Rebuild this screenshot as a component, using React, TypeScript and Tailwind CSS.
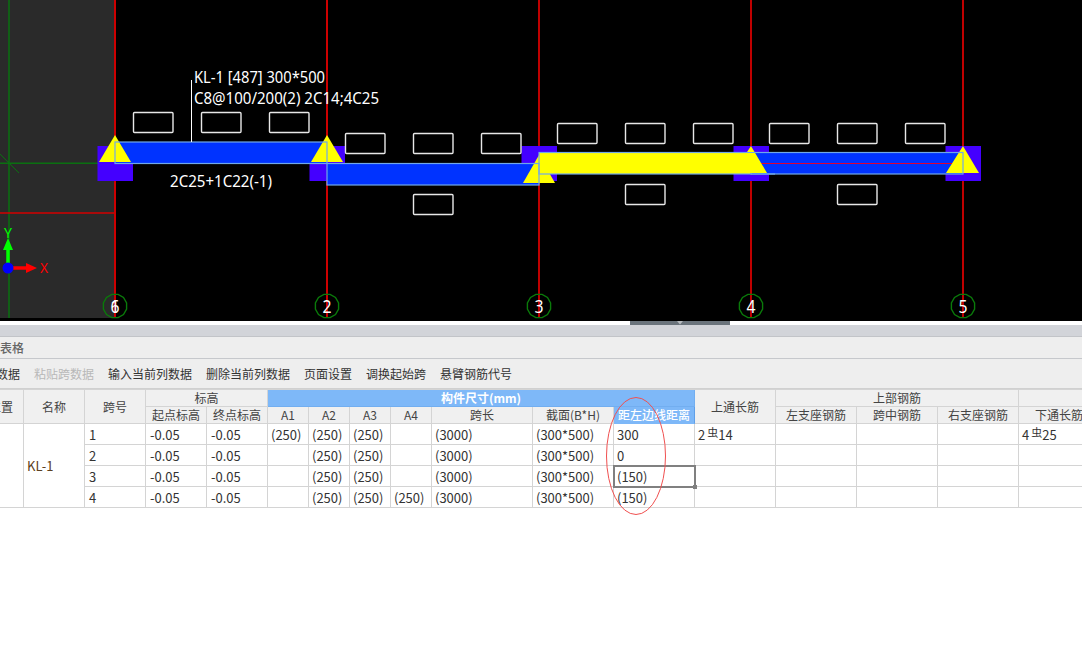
import React from "react";

const FONT = { fontFamily: '"Noto Sans CJK SC", sans-serif' };
const LATIN = '"Noto Sans", "Noto Sans CJK SC", sans-serif';

function Box({ x, y }: { x: number; y: number }) {
  return <rect x={x + 0.5} y={y + 0.5} width={39.5} height={20} rx={1} fill="#000" stroke="#e8e8e8" strokeWidth={1.4} />;
}

function Bubble({ x, labels }: { x: number; labels: string[] }) {
  const pts = Array.from({ length: 12 }, (_, i) => {
    const a = (Math.PI * 2 * (i + 0.5)) / 12;
    return `${x + 12 * Math.cos(a)},${306 + 12 * Math.sin(a)}`;
  }).join(" ");
  return (
    <g>
      <polygon points={pts} fill="none" stroke="#0a7a0a" strokeWidth={1.4} />
      {labels.map((l) => (
        <text key={l} x={x} y={312.5} fill="#fff" fontSize={18} textAnchor="middle" fontFamily={LATIN} textLength={9} lengthAdjust="spacingAndGlyphs">
          {l}
        </text>
      ))}
    </g>
  );
}

function Drawing() {
  return (
    <svg width={1082} height={321} viewBox="0 0 1082 321" className="block">
      <rect x={0} y={0} width={1082} height={321} fill="#000" />
      <rect x={0} y={0} width={115} height={318} fill="#2a2a2a" />
      <line x1={9} y1={0} x2={9} y2={318} stroke="#0a7010" strokeWidth={1.5} />
      <line x1={0} y1={163.3} x2={115} y2={163.3} stroke="#0a7010" strokeWidth={1.5} />
      <line x1={0} y1={154} x2={19} y2={173} stroke="#0a7010" strokeWidth={1} />
      <line x1={0} y1={213} x2={115} y2={213} stroke="#d40000" strokeWidth={1.6} />

      {[115, 327].map((x) => (
        <line key={x} x1={x} y1={0} x2={x} y2={317} stroke="#cc0000" strokeWidth={2} />
      ))}
      {[539, 751, 963].map((x) => (
        <line key={x} x1={x} y1={0} x2={x} y2={317} stroke="#f00000" strokeWidth={1.6} />
      ))}

      {[97, 309, 521, 733, 945].map((x) => (
        <rect key={x} x={x + 0.5} y={146} width={35.5} height={35} fill="#4400ff" />
      ))}

      <rect x={115} y={142} width={212} height={21.5} fill="#0033ff" />
      <rect x={327} y={163.5} width={212} height={21.5} fill="#0033ff" />
      <rect x={751} y={152.5} width={212} height={21.5} fill="#0033ff" />

      <polygon points="115,135 99,162 131,162" fill="#ffff00" />
      <polygon points="327,135 311,162 343,162" fill="#ffff00" />
      <polygon points="539,155 523,183 555,183" fill="#ffff00" />
      <polygon points="963,146 946,173 979,173" fill="#ffff00" />

      <rect x={539} y={152.5} width={212} height={21.5} fill="#ffff00" />

      <line x1={760} y1={163.5} x2={952} y2={163.5} stroke="#e00030" strokeWidth={1} />

      <rect x={115} y={142} width={212} height={21.5} fill="none" stroke="#70a8e8" strokeWidth={1.2} />
      <rect x={327} y={163.5} width={212} height={21.5} fill="none" stroke="#70a8e8" strokeWidth={1.2} />
      <rect x={539} y={152.5} width={212} height={21.5} fill="none" stroke="#70a8e8" strokeWidth={1.2} />
      <rect x={751} y={152.5} width={212} height={21.5} fill="none" stroke="#70a8e8" strokeWidth={1.2} />

      <polygon points="751,146 733,173 767,173" fill="#ffff00" />
      <line x1={733} y1={152.5} x2={775} y2={152.5} stroke="#70a8e8" strokeWidth={1.2} />
      <line x1={751} y1={174} x2={775} y2={174} stroke="#70a8e8" strokeWidth={1.2} />

      {[133, 201, 269].map((x) => <Box key={x} x={x} y={112} />)}
      {[345, 413, 481].map((x) => <Box key={x} x={x} y={133} />)}
      <Box x={413} y={194} />
      {[557, 625, 693, 769, 837, 905].map((x) => <Box key={x} x={x} y={123} />)}
      <Box x={625} y={184} />
      <Box x={837} y={184} />

      <line x1={191.5} y1={80} x2={191.5} y2={142} stroke="#fff" strokeWidth={1} />
      <text x={194} y={82.5} fill="#fff" fontSize={16} fontFamily={LATIN} textLength={131} lengthAdjust="spacingAndGlyphs">KL-1 [487] 300*500</text>
      <text x={194} y={104} fill="#fff" fontSize={16} fontFamily={LATIN} textLength={185} lengthAdjust="spacingAndGlyphs">C8@100/200(2) 2C14;4C25</text>
      <text x={170} y={187} fill="#fff" fontSize={16} fontFamily={LATIN} textLength={102} lengthAdjust="spacingAndGlyphs">2C25+1C22(-1)</text>

      <line x1={8} y1={268} x2={8} y2={248} stroke="#00ff00" strokeWidth={3.5} />
      <polygon points="8,238 3,250 13,250" fill="#00ff00" />
      <line x1={8} y1={268} x2={28} y2={268} stroke="#ff0000" strokeWidth={3.5} />
      <polygon points="37,268 26,263 26,273" fill="#ff0000" />
      <circle cx={8} cy={268} r={5.5} fill="#0000ff" />
      <text x={4} y={237.5} fill="#00ff00" fontSize={14} fontFamily={LATIN} textLength={8} lengthAdjust="spacingAndGlyphs">Y</text>
      <text x={40} y={273} fill="#ff0000" fontSize={14} fontFamily={LATIN} textLength={8} lengthAdjust="spacingAndGlyphs">X</text>

      <Bubble x={115} labels={["6", "1"]} />
      <Bubble x={327} labels={["2"]} />
      <Bubble x={539} labels={["3"]} />
      <Bubble x={751} labels={["4"]} />
      <Bubble x={963} labels={["5"]} />
    </svg>
  );
}

function Head({ children, className = "" }: { children?: React.ReactNode; className?: string }) {
  return (
    <div className={`flex items-center justify-center whitespace-nowrap overflow-hidden bg-[#f0f0f0] border-r border-b border-[#d4d4d4] text-[#444] ${className}`}>
      {children}
    </div>
  );
}

function Cell({ children, className = "" }: { children?: React.ReactNode; className?: string }) {
  return (
    <div className={`flex items-center pl-[4px] whitespace-nowrap overflow-hidden bg-white border-r border-b border-[#d4d4d4] text-[#333] text-[13px] ${className}`}>
      {children}
    </div>
  );
}

function Rebar({ n, d }: { n: string; d: string }) {
  return (
    <span className="flex items-center">
      {n}
      <span className="text-[11px] leading-none ml-[2px] mb-[4px]">虫</span>
      {d}
    </span>
  );
}

const rows = [
  { no: "1", a: ["(250)", "(250)", "(250)", ""], off: "300" },
  { no: "2", a: ["", "(250)", "(250)", ""], off: "0" },
  { no: "3", a: ["", "(250)", "(250)", ""], off: "(150)" },
  { no: "4", a: ["", "(250)", "(250)", "(250)"], off: "(150)" },
];

function SheetTable() {
  return (
    <div className="ml-[-21px] w-[1200px] border-t border-[#d4d4d4] grid grid-cols-[45px_61px_61px_61px_61px_41px_41px_41px_41px_101px_81px_81px_81px_81px_81px_81px_81px] grid-rows-[17px_17px_21px_21px_21px_21px] text-[12px] leading-none">
      <Head className="row-span-2">位置</Head>
      <Head className="row-span-2">名称</Head>
      <Head className="row-span-2">跨号</Head>
      <Head className="col-span-2">标高</Head>
      <Head className="col-span-7 !bg-[#7eb8f8] !text-white font-bold !border-[#72aef0]">构件尺寸(mm)</Head>
      <Head className="row-span-2">上通长筋</Head>
      <Head className="col-span-3">上部钢筋</Head>
      <Head />
      <Head>起点标高</Head>
      <Head>终点标高</Head>
      <Head>A1</Head>
      <Head>A2</Head>
      <Head>A3</Head>
      <Head>A4</Head>
      <Head>跨长</Head>
      <Head>截面(B*H)</Head>
      <Head className="!bg-[#7eb8f8] !text-white font-medium !border-r-[#5f9fe8] !border-b-[#7eb8f8]">距左边线距离</Head>
      <Head>左支座钢筋</Head>
      <Head>跨中钢筋</Head>
      <Head>右支座钢筋</Head>
      <Head>下通长筋</Head>

      <Cell className="row-span-4" />
      <Cell className="row-span-4 !pl-[3px] !text-[#5c4020]">KL-1</Cell>
      {rows.map((r) => (
        <React.Fragment key={r.no}>
          <Cell>{r.no}</Cell>
          <Cell>-0.05</Cell>
          <Cell>-0.05</Cell>
          {r.a.map((v, i) => (
            <Cell key={i} className="!pl-[3px]">{v}</Cell>
          ))}
          <Cell className="!pl-[3px]">(3000)</Cell>
          <Cell className="!pl-[3px]">(300*500)</Cell>
          <Cell className={r.no === "3" ? "relative z-10 !overflow-visible outline-2 -outline-offset-1 outline-[#808080] !pl-[3px]" : "!pl-[3px]"}>
            {r.off}
            {r.no === "3" && <span className="absolute right-[-3px] bottom-[-3px] w-[4px] h-[4px] bg-[#808080]" />}
          </Cell>
          <Cell className="!pl-[3px]">{r.no === "1" ? <Rebar n="2" d="14" /> : null}</Cell>
          <Cell />
          <Cell />
          <Cell />
          <Cell className="!pl-[3px]">{r.no === "1" ? <Rebar n="4" d="25" /> : null}</Cell>
        </React.Fragment>
      ))}
    </div>
  );
}

export default function App() {
  return (
    <div className="relative w-[1082px] h-[653px] overflow-hidden bg-white text-[12px]" style={FONT}>
      <Drawing />
      <div className="h-[4px] flex justify-center pl-[278px] bg-white">
        <div className="w-[100px] h-[4px] bg-[#6b747c] flex justify-center">
          <svg width={8} height={4} viewBox="0 0 8 4"><polygon points="1,0 7,0 4,3.5" fill="#b8bcc0" /></svg>
        </div>
      </div>
      <div className="h-[12px] bg-[#d2d4d9] border-b border-[#c2c4c8]" />
      <div className="h-[22px] bg-[#eeeeee] border-b border-[#c6c8cc] flex items-center font-medium text-[#666]">表格</div>
      <div className="h-[30px] bg-[#eeeeee] border-b border-[#d0d0d0] flex items-center gap-[14px] text-[#333] ml-[-40px]">
        <span>复制跨数据</span>
        <span className="text-[#b8b8b8]">粘贴跨数据</span>
        <span>输入当前列数据</span>
        <span>删除当前列数据</span>
        <span>页面设置</span>
        <span>调换起始跨</span>
        <span>悬臂钢筋代号</span>
      </div>
      <SheetTable />
      <svg width={62} height={120} viewBox="0 0 62 120" className="absolute left-[605px] top-[396px] pointer-events-none z-20">
        <ellipse cx={31} cy={60} rx={29.5} ry={58.5} fill="none" stroke="#f05050" strokeWidth={1} />
      </svg>
    </div>
  );
}
